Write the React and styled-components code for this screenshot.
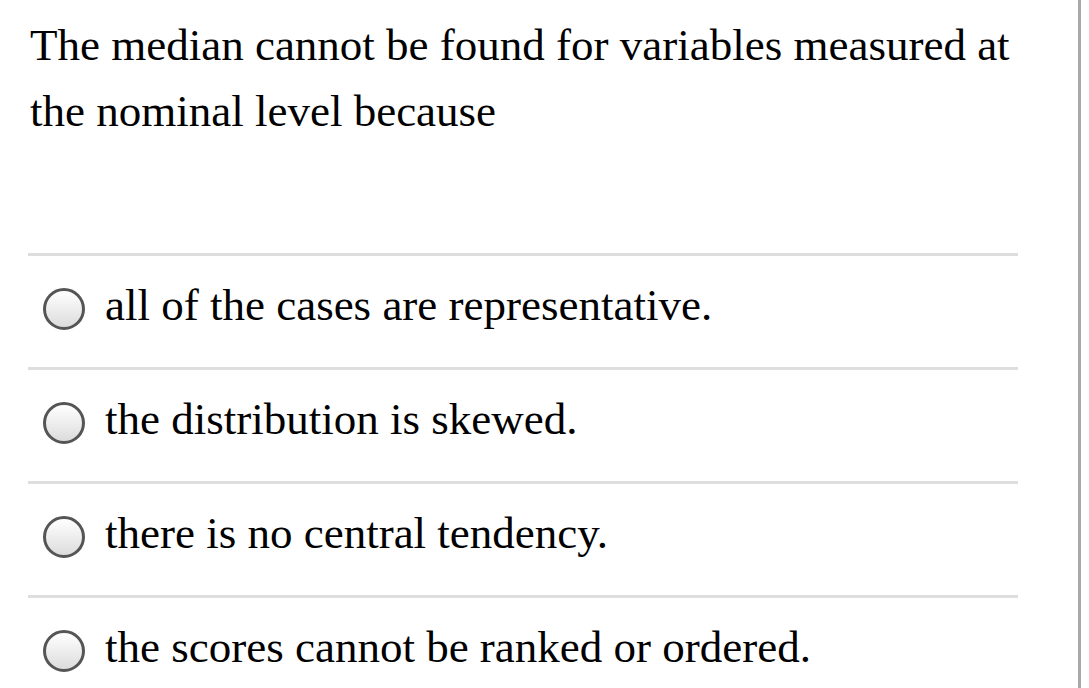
import React from "react";
import styled, { createGlobalStyle } from "styled-components";

const Global = createGlobalStyle`
  html, body { margin: 0; padding: 0; background: #fff; }
  body { font-family: "Liberation Serif", "Times New Roman", serif; color: #000; }
`;

const Page = styled.div`
  display: flex;
  width: 1089px;
  height: 688px;
  overflow: hidden;
`;

const Content = styled.div`
  width: 990px;
  padding-left: 28px;
`;

const Scrollbar = styled.div`
  width: 3px;
  margin-left: 60px;
  background: #a9a9a9;
  height: 688px;
`;

const Question = styled.p`
  margin: 0;
  padding: 12px 0 0 2px;
  font-size: 45px;
  line-height: 66px;
  height: 253px;
  box-sizing: border-box;
`;

const Option = styled.label`
  display: flex;
  align-items: flex-start;
  gap: 20px;
  height: 114px;
  box-sizing: border-box;
  border-top: 3px solid #dedede;
  padding: 23px 0 0 15px;
  font-size: 45px;
  line-height: normal;
`;

const Radio = styled.span`
  width: 36px;
  height: 36px;
  margin-top: 9px;
  border-radius: 50%;
  border: 3px solid #555;
  background: linear-gradient(#ffffff, #dcdcdc);
  flex: none;
`;

const options = [
  "all of the cases are representative.",
  "the distribution is skewed.",
  "there is no central tendency.",
  "the scores cannot be ranked or ordered.",
];

export default function App() {
  return (
    <>
      <Global />
      <Page>
        <Content>
          <Question>
            The median cannot be found for variables measured at the nominal level because
          </Question>
          {options.map((o) => (
            <Option key={o}>
              <Radio />
              <span>{o}</span>
            </Option>
          ))}
        </Content>
        <Scrollbar />
      </Page>
    </>
  );
}
